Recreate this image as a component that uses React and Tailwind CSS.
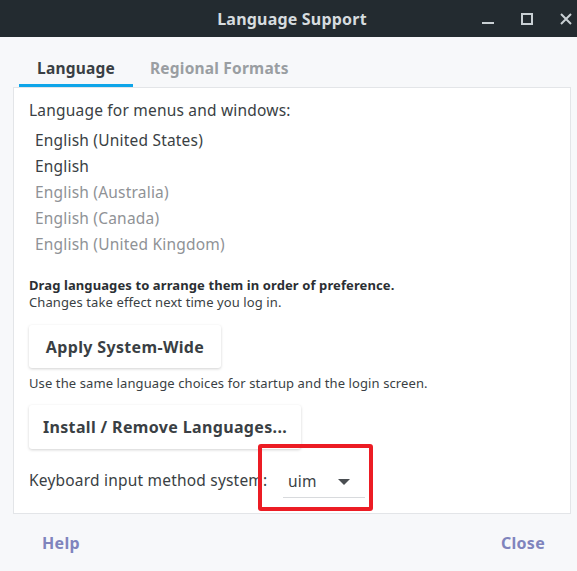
import React from "react";

const font = { fontFamily: '"Noto Sans", "Open Sans", sans-serif' };

export default function App() {
  const languages = [
    { name: "English (United States)", dim: false },
    { name: "English", dim: false },
    { name: "English (Australia)", dim: true },
    { name: "English (Canada)", dim: true },
    { name: "English (United Kingdom)", dim: true },
  ];

  return (
    <div className="w-[577px] h-[571px] bg-[#f7f8fa] flex flex-col overflow-hidden" style={font}>
      {/* Title bar */}
      <div className="h-[37px] bg-[#232b30] flex items-center relative shrink-0">
        <div className="flex-1 text-center text-[16px] tracking-[0.2px] font-bold text-[#d6dcdf] pl-[7px]">
          Language Support
        </div>
        <div className="absolute right-0 top-0 h-[37px] flex items-center gap-[27px] pr-[5px]">
          <svg width="12" height="12" viewBox="0 0 12 12">
            <rect x="0" y="9" width="12" height="2" fill="#c9d0d4" />
          </svg>
          <svg width="12" height="12" viewBox="0 0 12 12">
            <rect x="1" y="1" width="10" height="10" fill="none" stroke="#c9d0d4" strokeWidth="2" />
          </svg>
          <svg width="12" height="12" viewBox="0 0 12 12">
            <path d="M1 1 L11 11 M11 1 L1 11" stroke="#c9d0d4" strokeWidth="2" />
          </svg>
        </div>
      </div>

      {/* Tabs */}
      <div className="flex px-[19px] pt-[13px] shrink-0">
        <div className="w-[114px] h-[37px] pt-[3px] flex items-center justify-center border-b-[3px] border-[#0ea5e9] text-[15.5px] tracking-[0.2px] font-bold text-[#3a3f44]">
          Language
        </div>
        <div className="px-[17px] h-[37px] pt-[3px] flex items-center border-b-[3px] border-transparent text-[15.5px] tracking-[0.2px] font-bold text-[#9a9ea2]">
          Regional Formats
        </div>
      </div>

      {/* Panel */}
      <div className="ml-[13px] mr-[6px] h-[427px] bg-white border border-[#e3e5e8] px-[15px] pt-[12px] shrink-0 relative">
        <div className="text-[15.5px] tracking-[0.2px] text-[#3a3f44] leading-[20px]">
          Language for menus and windows:
        </div>
        <div className="mt-[8px] pl-[6px] flex flex-col">
          {languages.map((l) => (
            <div
              key={l.name}
              className={
                "h-[26px] flex items-center text-[15.5px] tracking-[0.2px] " +
                (l.dim ? "text-[#8f9296]" : "text-[#3a3f44]")
              }
            >
              {l.name}
            </div>
          ))}
        </div>
        <div className="mt-[19px] text-[13px] tracking-[0.1px] leading-[17px] font-bold text-[#2b2f33]">
          Drag languages to arrange them in order of preference.
        </div>
        <div className="text-[13px] tracking-[0.1px] leading-[17px] text-[#3a3f44]">
          Changes take effect next time you log in.
        </div>
        <button className="mt-[14px] w-[192px] h-[43px] bg-white rounded-[3px] shadow-[0_1px_3px_rgba(0,0,0,0.18)] text-[16px] tracking-[0.35px] font-bold text-[#3a3f44]">
          Apply System-Wide
        </button>
        <div className="mt-[7px] text-[13px] tracking-[0.1px] leading-[17px] text-[#3a3f44]">
          Use the same language choices for startup and the login screen.
        </div>
        <button className="mt-[13px] w-[272px] h-[44px] bg-white rounded-[3px] shadow-[0_1px_3px_rgba(0,0,0,0.18)] text-[16px] tracking-[0.35px] font-bold text-[#3a3f44]">
          Install / Remove Languages...
        </button>
        <div className="mt-[15px] flex items-center">
          <span className="w-[254px] text-[15.5px] tracking-[0.2px] text-[#3a3f44] whitespace-nowrap">
            Keyboard input method system:
          </span>
          <div className="relative w-[82px] h-[34px] border-b border-[#d8dadd] flex items-center justify-between pl-[5px] pr-[15px] pt-[2px]">
            <span className="text-[15.5px] tracking-[0.2px] text-[#3a3f44]">uim</span>
            <svg width="12" height="6" viewBox="0 0 12 6">
              <path d="M0 0 L12 0 L6 6 Z" fill="#4a4e52" />
            </svg>
            <div className="absolute left-[-25px] top-[-20px] w-[115px] h-[67px] border-[4px] border-[#ec1c24] rounded-[3px]" />
          </div>
        </div>
      </div>

      {/* Footer */}
      <div className="flex justify-between items-center pl-[42px] pr-[32px] mt-[17px] text-[16px] tracking-[0.3px] font-bold text-[#7f84bd]">
        <span>Help</span>
        <span>Close</span>
      </div>
    </div>
  );
}
